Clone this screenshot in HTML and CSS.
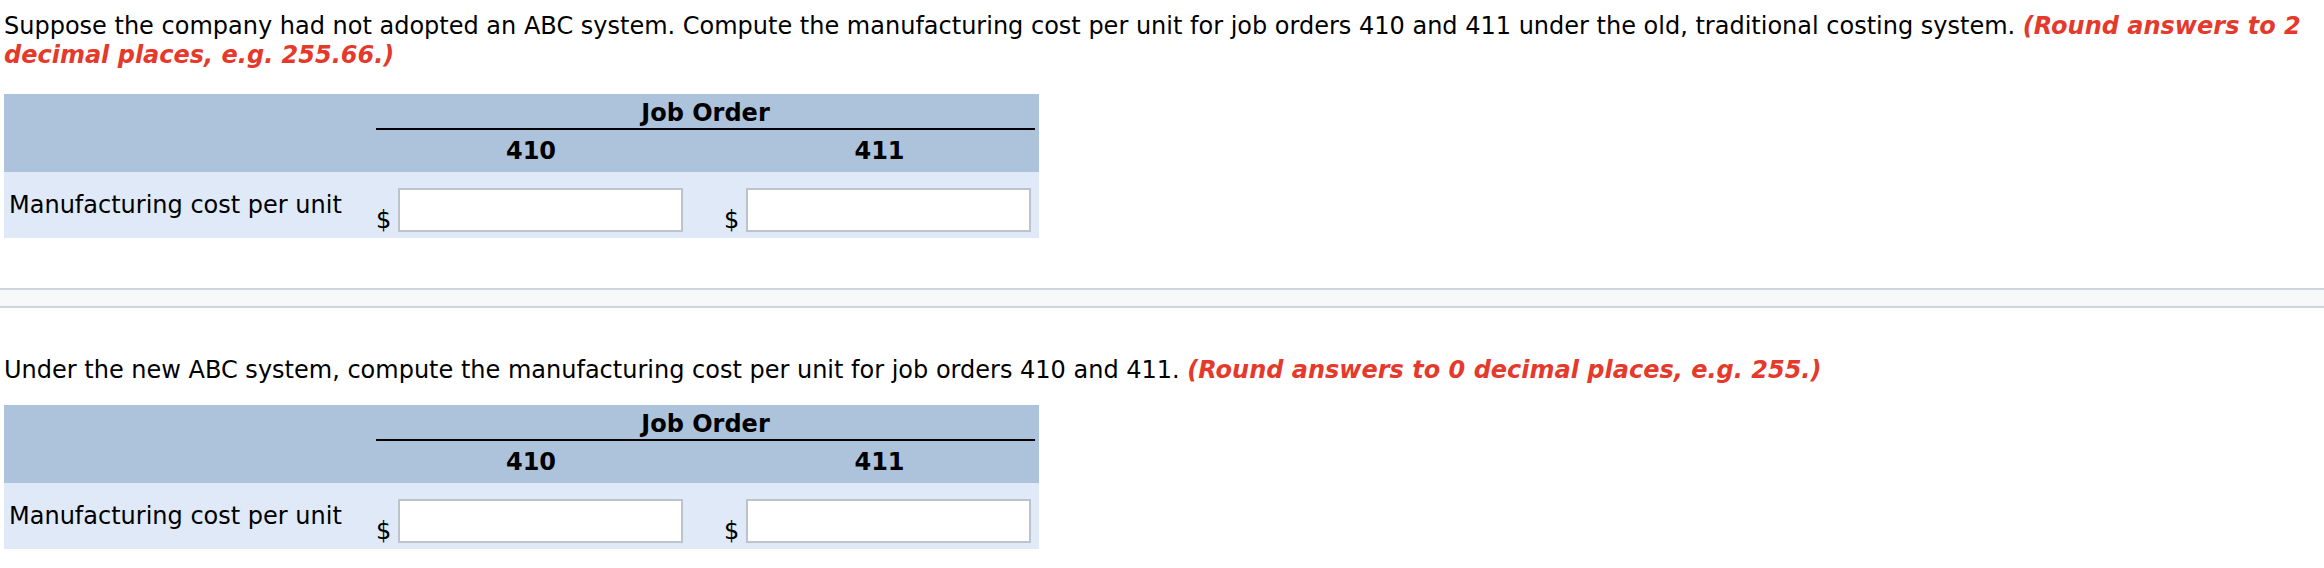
FILE: index.html
```html
<!DOCTYPE html>
<html>
<head>
<meta charset="utf-8">
<link rel="stylesheet" href="styles.css">
</head>
<body>
<section class="part">
  <p class="question">Suppose the company had not adopted an ABC system. Compute the manufacturing cost per unit for job orders 410 and 411 under the old, traditional costing system. <span class="note">(Round answers to 2</span> <span class="note">decimal places, e.g. 255.66.)</span></p>
  <table class="grid grid-first">
    <colgroup>
      <col class="c-label"><col class="c-cur"><col class="c-field"><col class="c-gap"><col class="c-cur"><col class="c-field2">
    </colgroup>
    <tr class="h1">
      <th></th>
      <th colspan="5" class="group"><div class="group-title">Job Order</div></th>
    </tr>
    <tr class="h2">
      <th></th>
      <th colspan="2" class="num">410</th>
      <th></th>
      <th colspan="2" class="num">411</th>
    </tr>
    <tr class="row">
      <td class="label">Manufacturing cost per unit</td>
      <td class="cur">$</td>
      <td class="field"><input type="text" class="box"></td>
      <td></td>
      <td class="cur">$</td>
      <td class="field"><input type="text" class="box"></td>
    </tr>
  </table>
</section>
<div class="divider"></div>
<section class="part part2">
  <p class="question">Under the new ABC system, compute the manufacturing cost per unit for job orders 410 and 411. <span class="note">(Round answers to 0 decimal places, e.g. 255.)</span></p>
  <table class="grid grid-second">
    <colgroup>
      <col class="c-label"><col class="c-cur"><col class="c-field"><col class="c-gap"><col class="c-cur"><col class="c-field2">
    </colgroup>
    <tr class="h1">
      <th></th>
      <th colspan="5" class="group"><div class="group-title">Job Order</div></th>
    </tr>
    <tr class="h2">
      <th></th>
      <th colspan="2" class="num">410</th>
      <th></th>
      <th colspan="2" class="num">411</th>
    </tr>
    <tr class="row">
      <td class="label">Manufacturing cost per unit</td>
      <td class="cur">$</td>
      <td class="field"><input type="text" class="box"></td>
      <td></td>
      <td class="cur">$</td>
      <td class="field"><input type="text" class="box"></td>
    </tr>
  </table>
</section>
</body>
</html>
```
FILE: styles.css
```css
body {
  margin: 0;
  font-family: Verdana, "DejaVu Sans", sans-serif;
  font-size: 24px;
  color: #000;
  background: #fff;
}
.part {
  padding: 12px 4px 0;
}
.question {
  margin: 0;
  line-height: 29px;
}
.note {
  color: #e53a2b;
  font-weight: bold;
  font-style: italic;
}
.grid {
  width: 1035px;
  table-layout: fixed;
  border-collapse: collapse;
  border-spacing: 0;
}
.grid-first {
  margin-top: 24px;
}
.grid-second {
  margin-top: 20px;
}
.c-label { width: 368px; }
.c-cur { width: 24px; }
.c-field { width: 294px; }
.c-gap { width: 30px; }
.c-field2 { width: 295px; }
.grid th {
  background: #adc3db;
  font-weight: bold;
  padding: 0;
}
.h1 { height: 36px; }
.h2 { height: 42px; }
.row { height: 66px; }
.group {
  padding: 0 4px !important;
  vertical-align: bottom;
}
.group-title {
  border-bottom: 2px solid #000;
  line-height: 30px;
  text-align: center;
}
.num {
  text-align: center;
  vertical-align: middle;
  line-height: 28px;
}
.row td {
  background: #dfe9f7;
  padding: 0;
  line-height: 28px;
}
.row .label {
  padding-left: 5px;
  vertical-align: middle;
  white-space: nowrap;
}
.row .cur {
  vertical-align: bottom;
  padding: 0 0 4px 4px;
}
.row .field {
  vertical-align: top;
  padding: 16px 0 0 2px;
}
.box {
  display: block;
  box-sizing: border-box;
  width: 285px;
  height: 44px;
  margin: 0;
  padding: 0;
  border: 2px solid #bcc3cb;
  border-radius: 0;
  background: #fff;
}
.divider {
  margin-top: 50px;
  height: 16px;
  background: #f6f8fa;
  border-top: 2px solid #ccd4dd;
  border-bottom: 2px solid #ccd4dd;
}
.part2 {
  padding-top: 48px;
}
```
